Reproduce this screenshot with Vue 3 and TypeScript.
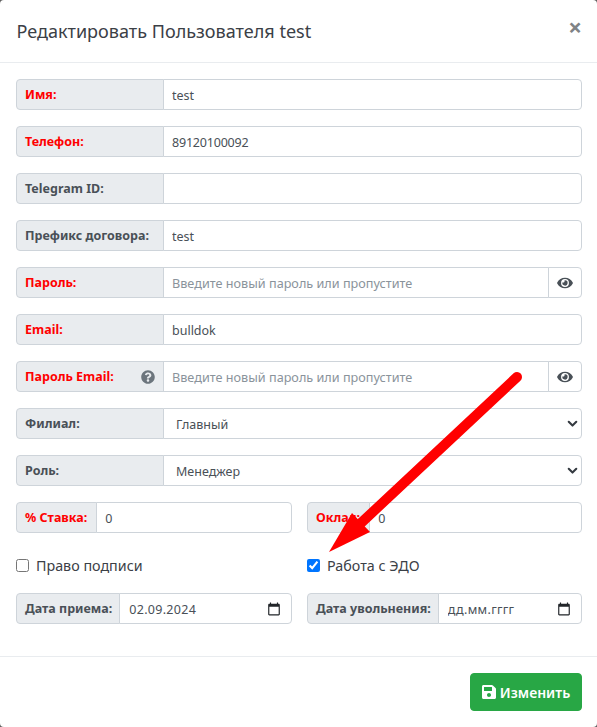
<script setup lang="ts">
interface Row {
  label: string
  value?: string
  placeholder?: string
  required?: boolean
  eye?: boolean
  help?: boolean
  select?: boolean
  digits?: boolean
}

const rows: Row[] = [
  { label: 'Имя:', value: 'test', required: true },
  { label: 'Телефон:', value: '89120100092', required: true, digits: true },
  { label: 'Telegram ID:', value: '' },
  { label: 'Префикс договора:', value: 'test' },
  { label: 'Пароль:', placeholder: 'Введите новый пароль или пропустите', required: true, eye: true },
  { label: 'Email:', value: 'bulldok', required: true },
  { label: 'Пароль Email:', placeholder: 'Введите новый пароль или пропустите', required: true, eye: true, help: true },
  { label: 'Филиал:', value: 'Главный', select: true },
  { label: 'Роль:', value: 'Менеджер', select: true },
]
</script>

<template>
  <div class="modal">
    <header class="modal-header">
      <h5 class="modal-title">Редактировать Пользователя test</h5>
      <button class="close" type="button">×</button>
    </header>

    <div class="modal-body">
      <div v-for="row in rows" :key="row.label" class="input-group">
        <span class="group-text wide" :class="{ required: row.required }">
          {{ row.label }}
          <svg v-if="row.help" class="help" viewBox="0 0 512 512">
            <path fill="#6c757d" d="M504 256c0 137-111 248-248 248S8 393 8 256 119 8 256 8s248 111 248 248zM262.700 90c-54.500 0-89.300 23-116.500 63.800-3.500 5.300-2.400 12.400 2.700 16.300l34.700 26.300c5.200 3.900 12.600 3 16.700-2.100 17.900-22.700 30.100-35.800 57.300-35.800 20.400 0 45.700 13.100 45.700 32.900 0 15-12.400 22.700-32.600 34-23.600 13.200-54.800 29.700-54.800 70.900V300c0 6.600 5.400 12 12 12h56c6.600 0 12-5.400 12-12v-1.300c0-28.600 83.500-29.800 83.500-107.200C380 133.200 319.600 90 262.700 90zM256 339c-25.500 0-46.200 20.700-46.200 46.200s20.700 46.200 46.200 46.200 46.200-20.700 46.200-46.200S281.500 339 256 339z" />
          </svg>
        </span>
        <div v-if="row.select" class="select-wrap">
          <select class="control select">
            <option>{{ row.value }}</option>
          </select>
          <svg class="chevron" viewBox="0 0 16 16">
            <path fill="none" stroke="#343a40" stroke-linecap="round" stroke-linejoin="round" stroke-width="3" d="M2.500 5.500L8 11l5.500-5.500" />
          </svg>
        </div>
        <input v-else class="control" :class="{ digits: row.digits }" type="text" :value="row.value" :placeholder="row.placeholder" />
        <span v-if="row.eye" class="group-text eye">
          <svg viewBox="0 0 576 512">
            <path fill="#495057" d="M572.500 241.400C518.300 135.600 410.900 64 288 64S57.700 135.600 3.500 241.400a32.400 32.400 0 0 0 0 29.200C57.700 376.400 165.100 448 288 448s230.300-71.600 284.500-177.400a32.400 32.400 0 0 0 0-29.200zM288 400a144 144 0 1 1 144-144 143.900 143.900 0 0 1-144 144zm0-240a95.300 95.300 0 0 0-25.300 3.800 47.900 47.900 0 0 1-66.900 66.900A95.800 95.800 0 1 0 288 160z" />
          </svg>
        </span>
      </div>

      <div class="two-cols">
        <div class="input-group">
          <span class="group-text required pad-more">% Ставка:</span>
          <input class="control" type="text" value="0" />
        </div>
        <div class="input-group">
          <span class="group-text required pad-more">Оклад:</span>
          <input class="control" type="text" value="0" />
        </div>
      </div>

      <div class="two-cols checks">
        <label class="check"><input type="checkbox" />Право подписи</label>
        <label class="check"><input type="checkbox" checked />Работа с ЭДО</label>
      </div>

      <div class="two-cols last">
        <div class="input-group">
          <span class="group-text pad-less">Дата приема:</span>
          <div class="date-wrap">
            <input class="control date" type="text" value="02.09.2024" />
            <svg class="calendar" viewBox="0 0 24 24">
              <path fill="#212529" d="M20 3h-1V1h-2v2H7V1H5v2H4c-1.100 0-2 .9-2 2v16c0 1.100.9 2 2 2h16c1.100 0 2-.9 2-2V5c0-1.100-.9-2-2-2zm0 18H4V8h16v13z" />
            </svg>
          </div>
        </div>
        <div class="input-group">
          <span class="group-text pad-less">Дата увольнения:</span>
          <div class="date-wrap">
            <input class="control date" type="text" value="дд.мм.гггг" />
            <svg class="calendar" viewBox="0 0 24 24">
              <path fill="#212529" d="M20 3h-1V1h-2v2H7V1H5v2H4c-1.100 0-2 .9-2 2v16c0 1.100.9 2 2 2h16c1.100 0 2-.9 2-2V5c0-1.100-.9-2-2-2zm0 18H4V8h16v13z" />
            </svg>
          </div>
        </div>
      </div>
    </div>

    <footer class="modal-footer">
      <button class="save" type="button">
        <svg viewBox="0 0 448 512">
          <path fill="#fff" d="M433.941 129.941l-83.882-83.882A48 48 0 0 0 316.118 32H48C21.490 32 0 53.490 0 80v352c0 26.510 21.490 48 48 48h352c26.510 0 48-21.490 48-48V163.882a48 48 0 0 0-14.059-33.941zM224 416c-35.346 0-64-28.654-64-64 0-35.346 28.654-64 64-64s64 28.654 64 64c0 35.346-28.654 64-64 64zm96-304.520V212c0 6.627-5.373 12-12 12H76c-6.627 0-12-5.373-12-12V108c0-6.627 5.373-12 12-12h228.520c3.183 0 6.235 1.264 8.485 3.515l3.480 3.480A11.996 11.996 0 0 1 320 111.480z" />
        </svg>
        Изменить
      </button>
    </footer>

    <!-- annotation drawn over the form -->
    <svg class="arrow" viewBox="0 0 597 727">
      <path d="M517 377L361 523" fill="none" stroke="#ff0000" stroke-width="10" stroke-linecap="round" />
      <path d="M329 552L352 513L370 532Z" fill="#ff0000" />
    </svg>
  </div>
</template>

<style>
html,
body {
  margin: 0;
  background: #5f5f5f;
}
</style>

<style scoped>
.modal {
  position: relative;
  width: 597px;
  height: 727px;
  box-sizing: border-box;
  background: #fff;
  border-radius: 4px;
  font-family: "Noto Sans", sans-serif;
  color: #212529;
  overflow: hidden;
}

.modal-header {
  height: 63px;
  box-sizing: border-box;
  padding: 0 15px 0 16.5px;
  display: flex;
  align-items: center;
  justify-content: space-between;
  border-bottom: 1px solid #e9ecef;
}

.modal-title {
  margin: 0;
  font-size: 18.05px;
  font-weight: 400;
  color: #3b4046;
}

.close {
  border: 0;
  background: none;
  padding: 0;
  margin: -8px 0 0;
  font-size: 24px;
  line-height: 1;
  font-weight: 700;
  color: #7f8386;
  font-family: "Noto Sans", sans-serif;
}

.modal-body {
  padding: 16px 15px 0 16px;
  height: 593px;
  box-sizing: border-box;
}

.input-group {
  display: flex;
  height: 31px;
  margin-bottom: 16px;
  min-width: 0;
}

.group-text {
  display: flex;
  align-items: center;
  flex-shrink: 0;
  box-sizing: border-box;
  padding: 0 8px;
  background: #e9ecef;
  border: 1px solid #ced4da;
  border-radius: 4px 0 0 4px;
  font-size: 12.5px;
  font-weight: 700;
  color: #495057;
  white-space: nowrap;
}

.group-text.wide {
  width: 148px;
  justify-content: space-between;
}

.group-text.pad-more {
  padding-right: 9px;
}

.group-text.pad-less {
  padding-right: 7px;
}

.required {
  color: #ff0000;
}

.help {
  width: 14px;
  height: 14px;
}

.control {
  flex: 1;
  min-width: 0;
  width: 100%;
  height: 31px;
  box-sizing: border-box;
  margin-left: -1px;
  padding: 2px 8px 0;
  border: 1px solid #ced4da;
  border-radius: 0 4px 4px 0;
  background: #fff;
  color: #495057;
  font-family: "Noto Sans", sans-serif;
  font-size: 12.5px;
  outline: none;
}

.control::placeholder {
  color: #8a939b;
  font-size: 12.66px;
}

.control.digits {
  letter-spacing: -0.2px;
}

.group-text.eye {
  width: 34px;
  margin-left: -1px;
  justify-content: center;
  padding: 0;
  background: #fff;
  border-radius: 0 4px 4px 0;
}

.input-group:has(.eye) .control {
  border-radius: 0;
}

.eye svg {
  width: 16px;
  height: 14px;
}

.select-wrap,
.date-wrap {
  position: relative;
  flex: 1;
  min-width: 0;
  display: flex;
}

.select {
  appearance: none;
  padding-left: 12px;
}

.chevron {
  position: absolute;
  right: 4px;
  top: 10px;
  width: 11px;
  height: 11px;
  pointer-events: none;
}

.date {
  padding-left: 9px;
  letter-spacing: 0.3px;
}

.calendar {
  position: absolute;
  right: 11px;
  top: 9px;
  width: 14px;
  height: 14px;
}

.two-cols {
  display: grid;
  grid-template-columns: 276px 275px;
  gap: 15px;
}

.two-cols.checks {
  height: 32px;
  align-items: center;
  margin-bottom: 12px;
}

.two-cols.last .input-group {
  margin-bottom: 0;
}

.check {
  display: flex;
  align-items: center;
  gap: 7px;
  font-size: 14.3px;
  color: #3b4046;
}

.check input {
  width: 13px;
  height: 13px;
  margin: 0;
}

.modal-footer {
  border-top: 1px solid #e9ecef;
  height: 71px;
  box-sizing: border-box;
  display: flex;
  justify-content: flex-end;
  padding: 16px 15px 0 0;
}

.save {
  display: flex;
  align-items: center;
  justify-content: center;
  gap: 4px;
  width: 112px;
  height: 38px;
  border: 1px solid #28a745;
  border-radius: 4px;
  background: #28a745;
  color: #fff;
  font-family: "Noto Sans", sans-serif;
  font-size: 14px;
  font-weight: 600;
}

.save svg {
  width: 14px;
  height: 16px;
}

.arrow {
  position: absolute;
  inset: 0;
  width: 597px;
  height: 727px;
  pointer-events: none;
}
</style>
